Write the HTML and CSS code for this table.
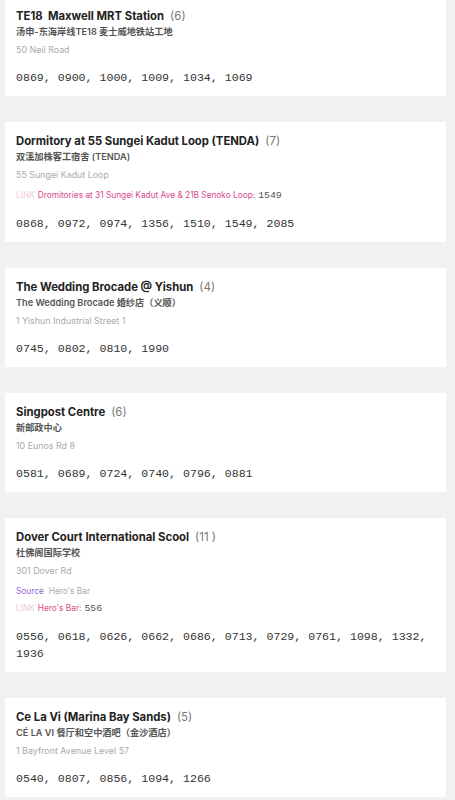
FILE: index.html
```html
<!DOCTYPE html>
<html lang="en">
<head>
<meta charset="utf-8">
<title>Locations</title>
<link rel="stylesheet" href="styles.css">
</head>
<body>
<div class="list">
  <section class="card">
    <div class="title"><span class="name">TE18&nbsp; Maxwell MRT Station</span><span class="count">(6)</span></div>
    <div class="cn">汤申-东海岸线TE18 麦士威地铁站工地</div>
    <div class="addr">50 Neil Road</div>
    <div class="codes">0869, 0900, 1000, 1009, 1034, 1069</div>
  </section>
  <section class="card">
    <div class="title"><span class="name">Dormitory at 55 Sungei Kadut Loop (TENDA)</span><span class="count">(7)</span></div>
    <div class="cn">双溪加株客工宿舍 (TENDA)</div>
    <div class="addr">55 Sungei Kadut Loop</div>
    <div class="meta"><span class="tag-link">LINK</span><span class="link">Dromitories at 31 Sungei Kadut Ave &amp; 21B Senoko Loop:</span><span class="num">1549</span></div>
    <div class="codes">0868, 0972, 0974, 1356, 1510, 1549, 2085</div>
  </section>
  <section class="card">
    <div class="title"><span class="name">The Wedding Brocade @ Yishun</span><span class="count">(4)</span></div>
    <div class="cn">The Wedding Brocade 婚纱店（义顺）</div>
    <div class="addr">1 Yishun Industrial Street 1</div>
    <div class="codes">0745, 0802, 0810, 1990</div>
  </section>
  <section class="card">
    <div class="title"><span class="name">Singpost Centre</span><span class="count">(6)</span></div>
    <div class="cn">新邮政中心</div>
    <div class="addr">10 Eunos Rd 8</div>
    <div class="codes">0581, 0689, 0724, 0740, 0796, 0881</div>
  </section>
  <section class="card">
    <div class="title"><span class="name">Dover Court International Scool</span><span class="count">(11 )</span></div>
    <div class="cn">杜佛阁国际学校</div>
    <div class="addr">301 Dover Rd</div>
    <div class="meta"><span class="tag-source">Source</span><span class="src">Hero's Bar</span></div>
    <div class="meta"><span class="tag-link">LINK</span><span class="link">Hero's Bar:</span><span class="num">556</span></div>
    <div class="codes">0556, 0618, 0626, 0662, 0686, 0713, 0729, 0761, 1098, 1332, 1936</div>
  </section>
  <section class="card">
    <div class="title"><span class="name">Ce La Vi (Marina Bay Sands)</span><span class="count">(5)</span></div>
    <div class="cn">CÉ LA VI 餐厅和空中酒吧（金沙酒店）</div>
    <div class="addr">1 Bayfront Avenue Level 57</div>
    <div class="codes">0540, 0807, 0856, 1094, 1266</div>
  </section>
</div>
</body>
</html>
```

FILE: styles.css
```css
html, body {
  margin: 0;
  padding: 0;
  background: #f1f1f3;
  font-family: Inter, "Noto Sans CJK SC", sans-serif;
}

.list {
  display: flex;
  flex-direction: column;
  gap: 26px;
  margin-top: -3px;
  padding: 0 9px 0 5px;
}

.card {
  background: #ffffff;
  padding: 12px 11px 10px 11px;
}

.title {
  display: flex;
  align-items: baseline;
  gap: 6px;
  line-height: 14px;
  white-space: nowrap;
}

.name {
  font-size: 11.3px;
  font-weight: 700;
  color: #222222;
}

.count {
  font-size: 11.5px;
  font-weight: 400;
  color: #777777;
}

.cn {
  margin-top: 2px;
  line-height: 14px;
  font-size: 9.2px;
  font-weight: 600;
  color: #555555;
}

.addr {
  margin-top: 4px;
  line-height: 14px;
  font-size: 8.9px;
  color: #aaaaaa;
}

.meta {
  margin-top: 6px;
  line-height: 14px;
  font-size: 8.3px;
  display: flex;
  align-items: baseline;
  gap: 3px;
  white-space: nowrap;
}

.meta + .meta {
  margin-top: 3px;
}

.tag-link {
  color: #f4c9da;
}

.link {
  color: #d84a8c;
}

.tag-source {
  color: #8f5fd6;
}

.src {
  color: #aaaaaa;
  margin-left: 2px;
}

.num {
  font-family: "Liberation Mono", monospace;
  font-size: 9.8px;
  color: #555555;
}

.codes {
  margin-top: 12px;
  line-height: 17px;
  font-family: "Liberation Mono", monospace;
  font-size: 11.6px;
  color: #333333;
}
```
